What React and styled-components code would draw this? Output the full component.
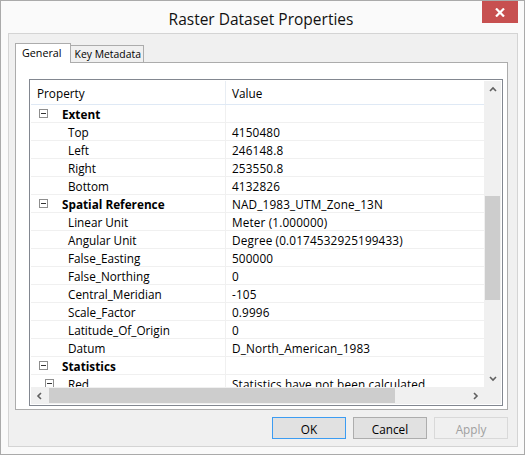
import React from "react";
import styled, { createGlobalStyle } from "styled-components";

const GlobalStyle = createGlobalStyle`
  html, body { margin: 0; padding: 0; background: #ffffff; }
  * { box-sizing: border-box; }
  body { font-family: "Open Sans", "Noto Sans", sans-serif; font-size: 11.75px; color: #000; }
`;

const Window = styled.div`
  width: 525px;
  height: 455px;
  border: 1px solid #aaaaaa;
  background: #fafafa;
  padding: 0 6px 7px 7px;
  display: flex;
  flex-direction: column;
`;

const TitleBar = styled.div`
  height: 32px;
  display: grid;
  grid-template-columns: 1fr auto 1fr;
  align-items: start;
`;

const Title = styled.div`
  grid-column: 2;
  font-size: 15.5px;
  line-height: 32px;
  padding-top: 2px;
  padding-right: 4px;
  color: #111;
`;

const CloseButton = styled.div`
  grid-column: 3;
  justify-self: end;
  width: 36px;
  height: 22px;
  background: #c75050;
  display: flex;
  align-items: center;
  justify-content: center;
`;

const Client = styled.div`
  flex: 1;
  border: 1px solid #d4d4d4;
  background: #f0f0f0;
  padding: 9px 9px 0 6px;
  display: flex;
  flex-direction: column;
`;

const TabStrip = styled.div`
  display: flex;
  align-items: flex-end;
  height: 19px;
  position: relative;
  z-index: 1;
`;

const Tab = styled.div`
  height: ${(p) => (p.$active ? "20px" : "18px")};
  margin-bottom: -1px;
  padding: ${(p) => (p.$active ? "0 8px 0 6px" : "0 2px 0 4px")};
  border: 1px solid #acacac;
  border-bottom: ${(p) => (p.$active ? "none" : "1px solid #acacac")};
  margin-left: ${(p) => (p.$active ? "0" : "-1px")};
  background: ${(p) => (p.$active ? "#ffffff" : "#f0f0f0")};
  z-index: ${(p) => (p.$active ? 2 : 1)};
  font-size: ${(p) => (p.$active ? "10.75px" : "10.4px")};
  line-height: ${(p) => (p.$active ? "19px" : "17px")};
  white-space: nowrap;
`;

const Panel = styled.div`
  width: 493px;
  height: 348px;
  border: 1px solid #acacac;
  background: #ffffff;
  padding: 16px 4px 3px 13px;
  display: flex;
`;

const Grid = styled.div`
  flex: 1;
  border: 1px solid #828790;
  padding: 1px;
  background: #ffffff;
  display: grid;
  grid-template-columns: 1fr 17px;
  grid-template-rows: 1fr 17px;
  overflow: hidden;
`;

const Viewport = styled.div`
  overflow: hidden;
  display: flex;
  flex-direction: column;
  min-width: 0;
  min-height: 0;
`;

const HeaderRow = styled.div`
  display: flex;
  height: 24px;
  flex: none;
  border-bottom: 1px solid #dfe9f5;
`;

const HeaderCell = styled.div`
  width: ${(p) => p.$w}px;
  flex: none;
  padding: 1px 0 0 6px;
  line-height: 23px;
  border-right: 1px solid #e8edf3;
`;

const Row = styled.div`
  display: flex;
  height: 18px;
  flex: none;
  border-bottom: 1px solid #f0f0f0;
`;

const NameCell = styled.div`
  width: 195px;
  flex: none;
  border-right: 1px solid #f0f0f0;
  display: flex;
  align-items: center;
  padding-left: ${(p) => p.$indent}px;
  font-weight: ${(p) => (p.$bold ? 700 : 400)};
  white-space: nowrap;
  line-height: 17px;
`;

const NameText = styled.span`
  padding-top: 2px;
`;

const ValueCell = styled.div`
  width: 400px;
  flex: none;
  padding: 1px 0 0 6px;
  line-height: 17px;
  white-space: nowrap;
  letter-spacing: 0.15px;
`;

const ToggleBox = styled.span`
  width: 9px;
  height: 9px;
  border: 1px solid #8e8e8e;
  display: inline-flex;
  align-items: center;
  justify-content: center;
  margin-right: ${(p) => p.$gap}px;
  flex: none;
  &::after {
    content: "";
    width: 5px;
    height: 1px;
    background: #333;
  }
`;

const VScroll = styled.div`
  background: #f0f0f0;
  display: flex;
  flex-direction: column;
`;

const HScroll = styled.div`
  background: #f0f0f0;
  display: flex;
  flex-direction: row;
`;

const Corner = styled.div`
  background: #f0f0f0;
`;

const ArrowButton = styled.div`
  width: 17px;
  height: 17px;
  flex: none;
  display: flex;
  align-items: center;
  justify-content: center;
`;

const Track = styled.div`
  flex: 1;
  display: flex;
  flex-direction: ${(p) => (p.$vertical ? "column" : "row")};
  padding: ${(p) => (p.$vertical ? "0 1px" : "1px 0")};
`;

const Thumb = styled.div`
  background: #cdcdcd;
  flex: none;
`;

const ButtonRow = styled.div`
  display: flex;
  justify-content: flex-end;
  gap: 7px;
  margin-top: 7px;
  padding-right: 0;
`;

const Button = styled.div`
  width: 74px;
  height: 22px;
  display: flex;
  align-items: center;
  justify-content: center;
  padding-top: 1px;
  background: ${(p) => (p.$disabled ? "#f0f0f0" : "#e1e1e1")};
  border: 1px solid
    ${(p) => (p.$default ? "#3c9cf2" : p.$disabled ? "#d9d9d9" : "#adadad")};
  color: ${(p) => (p.$disabled ? "#a0a0a0" : "#000")};
`;

const Chevron = ({ dir }) => {
  const pts = {
    up: "1,5 4,2 7,5",
    down: "1,2 4,5 7,2",
    left: "5,1 2,4 5,7",
    right: "2,1 5,4 2,7",
  }[dir];
  const vert = dir === "up" || dir === "down";
  return (
    <svg width={vert ? 8 : 7} height={vert ? 7 : 8} viewBox={vert ? "0 0 8 7" : "0 0 7 8"}>
      <polyline points={pts} fill="none" stroke="#606060" strokeWidth="1.6" />
    </svg>
  );
};

const rows = [
  { type: "cat", name: "Extent" },
  { name: "Top", value: "4150480" },
  { name: "Left", value: "246148.8" },
  { name: "Right", value: "253550.8" },
  { name: "Bottom", value: "4132826" },
  { type: "cat", name: "Spatial Reference", value: "NAD_1983_UTM_Zone_13N" },
  { name: "Linear Unit", value: "Meter (1.000000)" },
  { name: "Angular Unit", value: "Degree (0.0174532925199433)" },
  { name: "False_Easting", value: "500000" },
  { name: "False_Northing", value: "0" },
  { name: "Central_Meridian", value: "-105" },
  { name: "Scale_Factor", value: "0.9996" },
  { name: "Latitude_Of_Origin", value: "0" },
  { name: "Datum", value: "D_North_American_1983" },
  { type: "cat", name: "Statistics" },
  { type: "sub", name: "Red", value: "Statistics have not been calculated" },
  { name: "Green", value: "Statistics have not been calculated" },
];

export default function App() {
  return (
    <>
      <GlobalStyle />
      <Window>
        <TitleBar>
          <Title>Raster Dataset Properties</Title>
          <CloseButton>
            <svg width="10" height="9" viewBox="0 0 10 9">
              <path d="M1 0.5 L9 8.5 M9 0.5 L1 8.5" stroke="#fff" strokeWidth="2.2" />
            </svg>
          </CloseButton>
        </TitleBar>
        <Client>
          <TabStrip>
            <Tab $active>General</Tab>
            <Tab>Key Metadata</Tab>
          </TabStrip>
          <Panel>
            <Grid>
              <Viewport>
                <HeaderRow>
                  <HeaderCell $w={195}>Property</HeaderCell>
                  <HeaderCell $w={400}>Value</HeaderCell>
                </HeaderRow>
                {rows.map((r, i) => (
                  <Row key={i}>
                    {r.type === "cat" ? (
                      <NameCell $indent={8} $bold>
                        <ToggleBox $gap={14} />
                        <NameText>{r.name}</NameText>
                      </NameCell>
                    ) : r.type === "sub" ? (
                      <NameCell $indent={14}>
                        <ToggleBox $gap={14} />
                        <NameText>{r.name}</NameText>
                      </NameCell>
                    ) : (
                      <NameCell $indent={37}>
                        <NameText>{r.name}</NameText>
                      </NameCell>
                    )}
                    <ValueCell>{r.value}</ValueCell>
                  </Row>
                ))}
              </Viewport>
              <VScroll>
                <ArrowButton>
                  <Chevron dir="up" />
                </ArrowButton>
                <Track $vertical>
                  <Thumb style={{ marginTop: 98, height: 104 }} />
                </Track>
                <ArrowButton>
                  <Chevron dir="down" />
                </ArrowButton>
              </VScroll>
              <HScroll>
                <ArrowButton>
                  <Chevron dir="left" />
                </ArrowButton>
                <Track>
                  <Thumb style={{ marginLeft: 1, width: 346 }} />
                </Track>
                <ArrowButton>
                  <Chevron dir="right" />
                </ArrowButton>
              </HScroll>
              <Corner />
            </Grid>
          </Panel>
          <ButtonRow>
            <Button $default>OK</Button>
            <Button>Cancel</Button>
            <Button $disabled>Apply</Button>
          </ButtonRow>
        </Client>
      </Window>
    </>
  );
}
